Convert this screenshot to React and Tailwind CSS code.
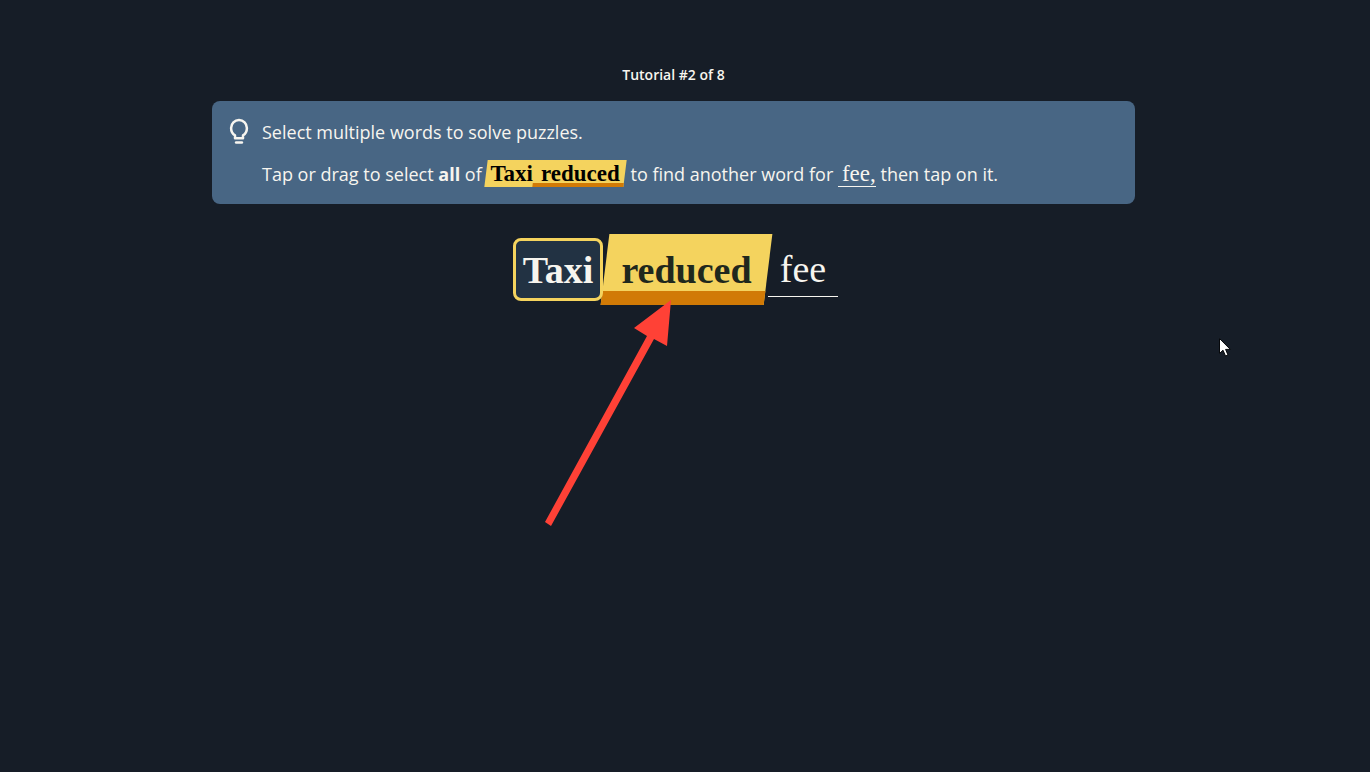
import React, { useState } from 'react';

const LightbulbIcon = () => (
  <svg className="w-7 h-7 shrink-0" viewBox="0 0 28 28" fill="none" stroke="#f7f5ef" aria-hidden="true">
    <path
      d="M9 20.2V17.4C6.6 15.9 5.1 13.3 5.1 10A7.9 7.9 0 0 1 20.9 10C20.9 13.3 19.4 15.9 17 17.4V20.2Z"
      strokeWidth="2.5"
      strokeLinejoin="round"
    />
    <path d="M10.1 24.6H15.9" strokeWidth="2.5" strokeLinecap="round" />
  </svg>
);

const Arrow = () => (
  <svg className="absolute top-[66px] -left-[61px] z-20 w-[130px] h-[228px] pointer-events-none" viewBox="0 0 130 228" fill="#ff4136" aria-hidden="true">
    <polygon points="127,0 123,46 110,39 7,226 1,222 103,36 90,28" />
  </svg>
);

const Cursor = () => (
  <svg className="absolute top-[338px] left-[1219px] w-3 h-[19px] pointer-events-none" viewBox="0 0 12 19" aria-hidden="true">
    <path d="M0.5 0.5V15.5L4 12.2L6.5 18L9 17L6.6 11.4H11.3Z" fill="#fff" stroke="#05070a" strokeWidth="1" />
  </svg>
);

const Hint = () => (
  <section className="flex gap-2 rounded-lg bg-[#486684] px-[14px] pt-[17px] pb-4">
    <LightbulbIcon />
    <div className="flex flex-col gap-[14px] text-[18px] leading-7">
      <p>Select multiple words to solve puzzles.</p>
      <p>
        Tap or drag to select <strong>all</strong> of{' '}
        <span className="relative z-0 inline-flex h-7 align-top font-['Liberation_Serif',serif] text-[23px] font-bold text-black">
          <span className="absolute inset-x-0 top-0 bottom-px -z-10 flex -skew-x-[7deg] bg-[#f4d35e]">
            <span className="mt-auto ml-auto h-1 w-[91px] bg-[#d17a06]" />
          </span>
          <span className="px-1">Taxi</span>
          <span className="pr-1.5 pl-1">reduced</span>
        </span>{' '}
        to find another word for{' '}
        <span className="inline-block h-[27px] border-b border-[#f7f5ef] pl-1 align-top font-['Liberation_Serif',serif] text-[23px]">fee,</span>{' '}
        then tap on it.
      </p>
    </div>
  </section>
);

const Puzzle = () => {
  const [selected, setSelected] = useState(['Taxi']);

  const toggle = (word) => {
    setSelected(selected.includes(word) ? selected.filter((w) => w !== word) : [...selected, word]);
  };

  return (
    <div className="mt-[30px] flex items-center justify-center pl-1 font-['Liberation_Serif',serif] text-[38px] leading-none">
      <button
        type="button"
        aria-pressed={selected.includes('Taxi')}
        onClick={() => toggle('Taxi')}
        className="z-10 h-[63px] w-[90px] rounded-lg border-3 border-[#f4d35e] bg-[#223243] font-bold"
      >
        Taxi
      </button>
      <div className="relative z-0 ml-0.5">
        <button
          type="button"
          aria-pressed={selected.includes('reduced')}
          onClick={() => toggle('reduced')}
          className="h-[71px] w-[163px] font-bold text-[#1f281d]"
        >
          <span className="absolute inset-0 -z-10 -skew-x-[7deg] border-b-14 border-[#d17a06] bg-[#f4d35e]" />
          reduced
        </button>
        <Arrow />
      </div>
      <button type="button" className="h-[55px] w-[70px] border-b border-[#f7f5ef]">
        fee
      </button>
    </div>
  );
};

const App = () => (
  <div className="relative min-h-screen bg-[#161d27] pr-[23px] font-['Open_Sans',sans-serif] text-[#f7f5ef]">
    <main className="mx-auto max-w-[923px] pt-16">
      <h1 className="mb-4 text-center text-[14px] font-semibold leading-[21px]">Tutorial #2 of 8</h1>
      <Hint />
      <Puzzle />
    </main>
    <Cursor />
  </div>
);

export default App;
